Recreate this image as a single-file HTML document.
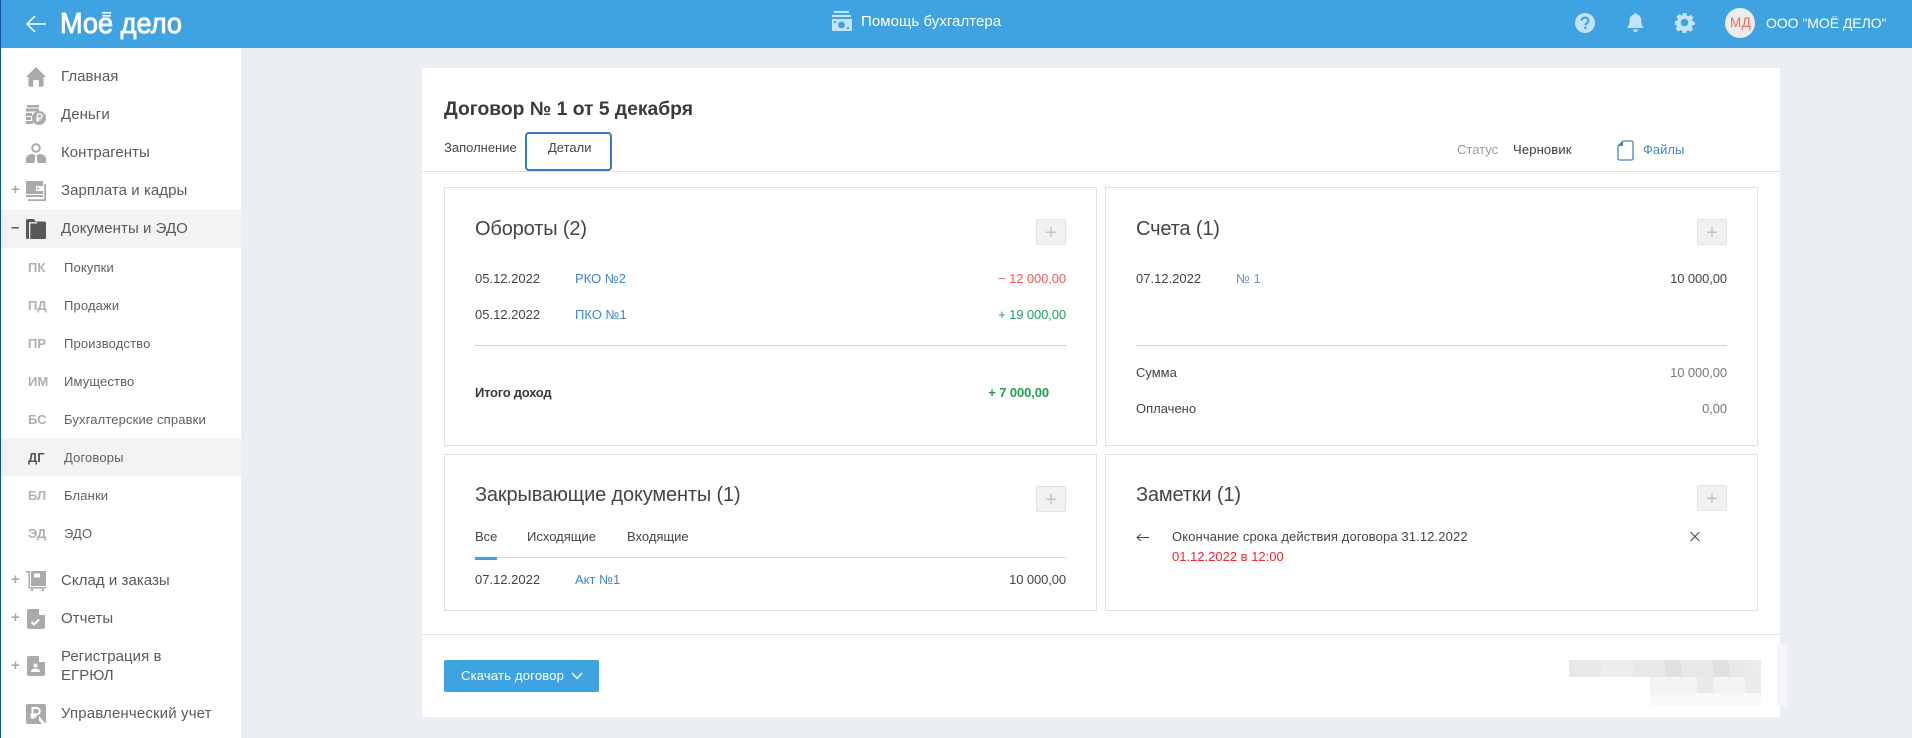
<!DOCTYPE html>
<html lang="ru"><head><meta charset="utf-8"><title>Договор</title>
<style>
html,body{margin:0;padding:0;width:1912px;height:738px;overflow:hidden;background:#ebeff3;font-family:"Liberation Sans",Arial,sans-serif;color:#444}
.a{position:absolute}
.t{position:absolute;white-space:nowrap;line-height:20px;font-size:13px;letter-spacing:0;color:#444;transform:translateY(-9px)}
.r{transform:translate(-100%,-9px);letter-spacing:-.1px}
.m{font-size:15px;color:#5a5a5a;letter-spacing:.05px}
.s{font-size:13px;color:#5f5f5f;letter-spacing:.14px;transform:translateY(-10px)}
.c{font-size:13px;font-weight:bold;color:#b0b0b0;letter-spacing:0;transform:translateY(-10px)}
.h{font-size:20px;color:#444;letter-spacing:-.15px;transform:translateY(-9px)}
.l{color:#3f87c9}
.box{position:absolute;border:1px solid #e0e0e0;box-sizing:border-box;background:#fff}
.hr{position:absolute;height:1px;background:#d0d0d0}
.plus{position:absolute;width:30px;height:26px;box-sizing:border-box;background:#f1f1f1;border:1px solid #e2e2e2;border-radius:2px;color:#c4c4c4;font-size:20px;line-height:26px;text-align:center}
.pm{position:absolute;left:11px;color:#aaa;font-size:15px;font-weight:bold;line-height:20px;transform:translateY(-10px)}
svg{position:absolute;display:block}
</style></head><body>

<!-- header -->
<div class="a" style="left:0;top:0;width:1912px;height:48px;background:#3ea3e0"></div>
<svg style="left:24px;top:12px" width="24" height="24" viewBox="0 0 24 24"><path d="M22 12H3M11 4l-8 8 8 8" fill="none" stroke="#fff" stroke-width="1.500"/></svg>
<svg style="left:56px;top:4px" width="134" height="38" viewBox="0 0 134 38">
<text x="4" y="29" font-family="Liberation Sans" font-size="29" fill="#fff" stroke="#fff" stroke-width=".9" textLength="122" lengthAdjust="spacingAndGlyphs">Моё дело</text>
<rect x="42" y="3" width="17" height="10.500" fill="#3ea3e0"/>
<rect x="46" y="8" width="9" height="1.600" fill="#fff"/><rect x="46" y="11" width="9" height="1.600" fill="#fff"/>
</svg>

<svg style="left:831px;top:10px" width="21" height="22" viewBox="0 0 21 22"><g fill="#c5e3f7"><rect x="3" y="1" width="15" height="2"/><rect x="1" y="5" width="19" height="2"/><rect x="1" y="9" width="20" height="12"/></g><circle cx="10.500" cy="15" r="3.400" fill="#3ea3e0"/><rect x="3" y="11" width="2" height="2" fill="#3ea3e0"/><rect x="16" y="17" width="2" height="2" fill="#3ea3e0"/></svg>
<div class="t" style="left:861px;top:21px;font-size:15px;color:#fff;letter-spacing:.05px">Помощь бухгалтера</div>

<svg style="left:1575px;top:13px" width="20" height="20" viewBox="0 0 20 20"><circle cx="10" cy="10" r="10" fill="#c5e3f7"/><path d="M6.600 7.800c0-2 1.500-3.200 3.500-3.200 2 0 3.400 1.200 3.400 2.900 0 2.500-3 2.500-3 4.800" fill="none" stroke="#3ea3e0" stroke-width="2.200"/><rect x="9.300" y="13.600" width="2.400" height="2.400" fill="#3ea3e0"/></svg>
<svg style="left:1627px;top:12px" width="17" height="22" viewBox="0 0 17 22"><path d="M8.500 1c.9 0 1.500.6 1.500 1.500 3 .7 4.300 3 4.300 6 0 4 .8 5.500 2.500 7.500H0c1.700-2 2.500-3.500 2.500-7.500 0-3 1.300-5.300 4.500-6C7 1.600 7.600 1 8.500 1z" fill="#c5e3f7"/><path d="M6 17.500h5c0 1.600-1 2.500-2.500 2.500S6 19 6 17.500z" fill="#c5e3f7"/></svg>
<svg style="left:1675px;top:13px" width="20" height="20" viewBox="0 0 20 20"><path fill="#c5e3f7" fill-rule="evenodd" d="M8 0h4l.5 2.800 1.700.7L16.600 2l2.800 2.800-1.500 2.400.7 1.700 2.400.5v3l-2.700.6-.7 1.700 1.500 2.400-2.800 2.700-2.400-1.500-1.700.7-.5 2.400H8l-.5-2.700-1.700-.7-2.400 1.500L.6 16.900l1.500-2.400-.7-1.700L0 12V8.500l2.400-.5.700-1.700L1.600 3.900 4.400 1.100l2.400 1.500 1.200-.5zM10 6a4 4 0 100 8 4 4 0 000-8z" transform="scale(.95)"/></svg>
<div class="a" style="left:1725px;top:8px;width:30px;height:30px;border-radius:50%;background:#ececec"></div>
<div class="t" style="left:1730px;top:22px;font-size:13.500px;color:#ee6a60;letter-spacing:.4px">МД</div>
<div class="t" style="left:1766px;top:22px;font-size:14px;color:#fff;letter-spacing:-.05px">ООО "МОЁ ДЕЛО"</div>

<!-- sidebar -->
<div class="a" style="left:0;top:48px;width:241px;height:690px;background:#fff"></div>
<div class="a" style="left:0;top:0;width:1px;height:738px;background:#0b53a8"></div>
<div class="a" style="left:1px;top:210px;width:240px;height:38px;background:#f3f3f4"></div>
<div class="a" style="left:1px;top:438px;width:240px;height:38px;background:#f3f3f4"></div>

<svg style="left:26px;top:67px" width="20" height="20" viewBox="0 0 20 20"><path d="M10 0L20 10h-2.500v8.500c0 .8-.6 1.300-1.300 1.300H12.800V13H7.200v6.800H3.800c-.7 0-1.300-.5-1.300-1.300V10H0z" fill="#aaa"/></svg>
<svg style="left:26px;top:105px" width="20" height="20" viewBox="0 0 20 20"><g fill="#aaa"><rect x="1" y="0" width="12" height="2.500"/><rect x="0" y="3.500" width="13" height="3"/><rect x="0" y="8" width="6" height="3"/><rect x="0" y="12" width="5" height="3"/><rect x="0" y="16" width="7" height="3"/><circle cx="13" cy="13" r="7"/></g><path d="M11.500 17V9h2.500a2 2 0 010 4.200h-4M10 15h4.500" fill="none" stroke="#fff" stroke-width="1.300"/></svg>
<svg style="left:26px;top:143px" width="20" height="20" viewBox="0 0 20 20"><circle cx="10" cy="5" r="3.800" fill="none" stroke="#aaa" stroke-width="2"/><path d="M0 20v-4c0-2.800 2.500-4.800 6.500-5.300L10 13l3.500-2.300c4 .5 6.500 2.500 6.500 5.300v4z" fill="#aaa"/><path d="M9.200 13h1.600l.7 7h-3z" fill="#fff"/></svg>
<svg style="left:26px;top:181px" width="20" height="20" viewBox="0 0 20 20"><path d="M0 0h17v16H0z" fill="#aaa"/><path d="M17 3h3v17H2v-1.800h16.200V3z" fill="#aaa"/><rect x="10" y="5" width="7" height="5" fill="#fff"/><circle cx="12" cy="7.500" r="1.100" fill="#aaa"/><rect x="0" y="13" width="17" height="1" fill="#fff"/></svg>
<svg style="left:26px;top:219px" width="20" height="20" viewBox="0 0 20 20"><path d="M0 1.500C0 .7.700 0 1.500 0H8l1.500 2.500h9c.8 0 1.500.7 1.500 1.500v14.500c0 .8-.7 1.500-1.500 1.500H1.500C.700 20 0 19.300 0 18.500z" fill="#585858"/><rect x="3" y="3.500" width="1.300" height="16.500" fill="#f3f3f4"/><rect x="3" y="3.200" width="8" height="1.300" fill="#f3f3f4"/></svg>
<div class="pm" style="top:190px">+</div><div class="pm" style="top:228px;color:#555">–</div>

<div class="t m" style="left:61px;top:76px">Главная</div>
<div class="t m" style="left:61px;top:114px">Деньги</div>
<div class="t m" style="left:61px;top:152px">Контрагенты</div>
<div class="t m" style="left:61px;top:190px">Зарплата и кадры</div>
<div class="t m" style="left:61px;top:228px">Документы и ЭДО</div>

<div class="t c" style="left:28px;top:268px">ПК</div><div class="t s" style="left:64px;top:268px">Покупки</div>
<div class="t c" style="left:28px;top:306px">ПД</div><div class="t s" style="left:64px;top:306px">Продажи</div>
<div class="t c" style="left:28px;top:344px">ПР</div><div class="t s" style="left:64px;top:344px">Производство</div>
<div class="t c" style="left:28px;top:382px">ИМ</div><div class="t s" style="left:64px;top:382px">Имущество</div>
<div class="t c" style="left:28px;top:420px">БС</div><div class="t s" style="left:64px;top:420px">Бухгалтерские справки</div>
<div class="t c" style="left:28px;top:458px;color:#555">ДГ</div><div class="t s" style="left:64px;top:458px">Договоры</div>
<div class="t c" style="left:28px;top:496px">БЛ</div><div class="t s" style="left:64px;top:496px">Бланки</div>
<div class="t c" style="left:28px;top:534px">ЭД</div><div class="t s" style="left:64px;top:534px">ЭДО</div>

<svg style="left:26px;top:571px" width="20" height="20" viewBox="0 0 20 20"><path d="M0 0h4v16h16v1.500H2.500V1.500H0z" fill="#aaa"/><rect x="5" y="0" width="15" height="15" fill="#aaa"/><rect x="8" y="2.500" width="6" height="4" fill="#fff"/><circle cx="6" cy="19" r="1.300" fill="#aaa"/><circle cx="17" cy="19" r="1.300" fill="#aaa"/></svg>
<svg style="left:27px;top:609px" width="18" height="20" viewBox="0 0 18 20"><path d="M2 0h10l6 6v12a2 2 0 01-2 2H2a2 2 0 01-2-2V2a2 2 0 012-2z" fill="#aaa"/><path d="M12 0l6 6h-6z" fill="#fff"/><path d="M4.500 13l2.500 2.500 5-5" fill="none" stroke="#fff" stroke-width="2"/></svg>
<svg style="left:27px;top:656px" width="18" height="20" viewBox="0 0 18 20"><path d="M2 0h10l6 6v12a2 2 0 01-2 2H2a2 2 0 01-2-2V2a2 2 0 012-2z" fill="#aaa"/><path d="M12 0l6 6h-6z" fill="#fff"/><circle cx="8.500" cy="9.500" r="2" fill="#fff"/><path d="M4 16c0-2.500 2-3.500 4.500-3.500S13 13.500 13 16z" fill="#fff"/></svg>
<svg style="left:26px;top:704px" width="20" height="20" viewBox="0 0 20 20"><rect width="20" height="20" rx="2" fill="#aaa"/><path d="M6.500 15V4h4a3.200 3.200 0 010 6.500h-6M4.500 12.800h6" fill="none" stroke="#fff" stroke-width="2"/><path d="M13 12l7 8h-4l-3-3.500V12z" fill="#fff"/></svg>
<div class="pm" style="top:580px">+</div><div class="pm" style="top:618px">+</div><div class="pm" style="top:666px">+</div>

<div class="t m" style="left:61px;top:580px">Склад и заказы</div>
<div class="t m" style="left:61px;top:618px">Отчеты</div>
<div class="t m" style="left:61px;top:656px">Регистрация в</div>
<div class="t m" style="left:61px;top:675px">ЕГРЮЛ</div>
<div class="t m" style="left:61px;top:713px;letter-spacing:.15px">Управленческий учет</div>

<!-- card -->
<div class="a" style="left:422px;top:68px;width:1358px;height:649px;background:#fff"></div>
<div class="t" style="left:444px;top:109px;font-size:19.300px;font-weight:bold;color:#3a3a3a">Договор № 1 от 5 декабря</div>
<div class="t" style="left:444px;top:147px">Заполнение</div>
<div class="a" style="left:525px;top:132px;width:87px;height:39px;box-sizing:border-box;border:2.500px solid #3a78bd;border-radius:4px"></div>
<div class="t" style="left:548px;top:147px">Детали</div>
<div class="a" style="left:422px;top:171px;width:1358px;height:1px;background:#e0e0e0"></div>

<div class="t" style="left:1457px;top:149px;color:#9a9a9a">Статус</div>
<div class="t" style="left:1513px;top:149px;color:#3a3a3a;letter-spacing:.15px">Черновик</div>
<svg style="left:1617px;top:140px" width="17" height="21" viewBox="0 0 17 21"><path d="M6 1h8.500c.8 0 1.500.7 1.500 1.500v16c0 .8-.7 1.500-1.500 1.500h-12C1.700 20 1 19.300 1 18.500V6z" fill="none" stroke="#3f87c9" stroke-width="1.300"/><path d="M6 1v5H1z" fill="#3f87c9"/></svg>
<div class="t l" style="left:1643px;top:149px">Файлы</div>

<!-- boxes -->
<div class="box" style="left:444px;top:187px;width:653px;height:259px"></div>
<div class="box" style="left:1105px;top:187px;width:653px;height:259px"></div>
<div class="box" style="left:444px;top:454px;width:653px;height:157px"></div>
<div class="box" style="left:1105px;top:454px;width:653px;height:157px"></div>

<div class="t h" style="left:475px;top:228px">Обороты (2)</div>
<div class="plus" style="left:1036px;top:219px">+</div>
<div class="t" style="left:475px;top:278px">05.12.2022</div><div class="t l" style="left:575px;top:278px">РКО №2</div>
<div class="t r" style="left:1066px;top:278px;color:#ec5a5a">− 12 000,00</div>
<div class="t" style="left:475px;top:314px">05.12.2022</div><div class="t l" style="left:575px;top:314px">ПКО №1</div>
<div class="t r" style="left:1066px;top:314px;color:#1f9d62">+ 19 000,00</div>
<div class="hr" style="left:475px;top:345px;width:591px"></div>
<div class="t" style="left:475px;top:392px;font-weight:bold;color:#3a3a3a;letter-spacing:-.25px">Итого доход</div>
<div class="t r" style="left:1049px;top:392px;font-weight:bold;color:#1f9d52">+ 7 000,00</div>

<div class="t h" style="left:1136px;top:228px">Счета (1)</div>
<div class="plus" style="left:1697px;top:219px">+</div>
<div class="t" style="left:1136px;top:278px">07.12.2022</div><div class="t l" style="left:1236px;top:278px;color:#6f8fcf">№ 1</div>
<div class="t r" style="left:1727px;top:278px">10 000,00</div>
<div class="hr" style="left:1136px;top:345px;width:591px"></div>
<div class="t" style="left:1136px;top:372px">Сумма</div><div class="t r" style="left:1727px;top:372px;color:#777">10 000,00</div>
<div class="t" style="left:1136px;top:408px">Оплачено</div><div class="t r" style="left:1727px;top:408px;color:#777">0,00</div>

<div class="t h" style="left:475px;top:494px">Закрывающие документы (1)</div>
<div class="plus" style="left:1036px;top:486px">+</div>
<div class="t" style="left:475px;top:536px">Все</div>
<div class="t" style="left:527px;top:536px">Исходящие</div>
<div class="t" style="left:627px;top:536px">Входящие</div>
<div class="a" style="left:475px;top:557px;width:591px;height:1px;background:#d8d8d8"></div>
<div class="a" style="left:475px;top:557px;width:22px;height:3px;background:#3ea3e0"></div>
<div class="t" style="left:475px;top:579px">07.12.2022</div><div class="t l" style="left:575px;top:579px">Акт №1</div>
<div class="t r" style="left:1066px;top:579px">10 000,00</div>

<div class="t h" style="left:1136px;top:494px">Заметки (1)</div>
<div class="plus" style="left:1697px;top:485px">+</div>
<svg style="left:1136px;top:532px" width="14" height="11" viewBox="0 0 14 11"><path d="M13 5.500H1M5 2L1 5.500 5 9" fill="none" stroke="#444" stroke-width="1"/></svg>
<div class="t" style="left:1172px;top:536px;letter-spacing:.12px">Окончание срока действия договора 31.12.2022</div>
<div class="t" style="left:1172px;top:556px;color:#f02530">01.12.2022 в 12:00</div>
<svg style="left:1690px;top:531px" width="10" height="11" viewBox="0 0 10 11"><path d="M.5 1l9 9M9.500 1l-9 9" fill="none" stroke="#444" stroke-width="1"/></svg>

<!-- footer -->
<div class="a" style="left:422px;top:634px;width:1358px;height:1px;background:#e4e4e4"></div>
<div class="a" style="left:444px;top:660px;width:155px;height:32px;background:#3ea3e0;border-radius:2px"></div>
<div class="t" style="left:461px;top:675px;color:#fff;letter-spacing:.2px">Скачать договор</div>
<svg style="left:571px;top:672px" width="12" height="8" viewBox="0 0 12 8"><path d="M1 1l5 5.500L11 1" fill="none" stroke="#fff" stroke-width="1.400"/></svg>

<div class="a" style="left:1569px;top:660px;width:192px;height:17px;background:#e8e8e8"></div>
<div class="a" style="left:1601px;top:660px;width:32px;height:17px;background:#ededed"></div>
<div class="a" style="left:1665px;top:660px;width:16px;height:17px;background:#e0e0e0"></div>
<div class="a" style="left:1713px;top:660px;width:16px;height:17px;background:#e0e0e0"></div>
<div class="a" style="left:1745px;top:660px;width:16px;height:17px;background:#ececec"></div>
<div class="a" style="left:1650px;top:677px;width:111px;height:16px;background:#f3f3f3"></div>
<div class="a" style="left:1697px;top:677px;width:16px;height:16px;background:#e9e9e9"></div>
<div class="a" style="left:1745px;top:677px;width:16px;height:16px;background:#ebebeb"></div>
<div class="a" style="left:1650px;top:693px;width:111px;height:13px;background:#f9f9f9"></div>
<div class="a" style="left:1777px;top:644px;width:10px;height:62px;background:#f4f6f8"></div>
</body></html>
